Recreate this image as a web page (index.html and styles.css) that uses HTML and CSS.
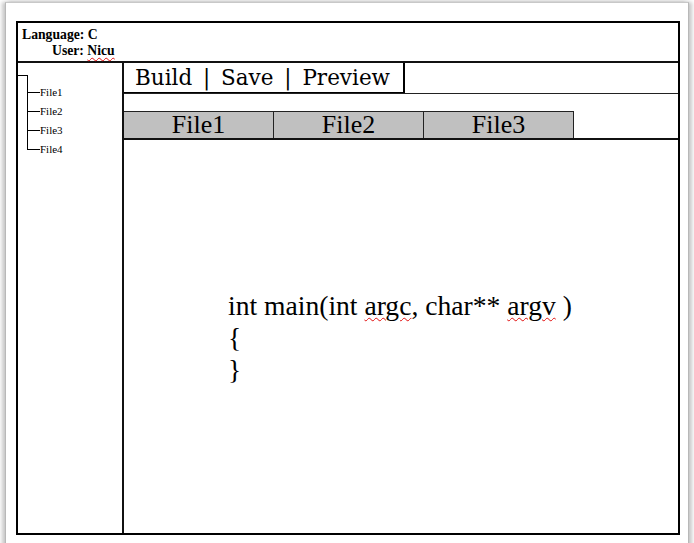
FILE: index.html
```html
<!DOCTYPE html>
<html>
<head>
<meta charset="utf-8">
<link rel="stylesheet" href="styles.css">
</head>
<body>
<div class="page">
  <div class="frame">
    <div class="header">
      <div class="hline">Language: C</div>
      <div class="hline indent">User: <span class="spell">Nicu</span></div>
    </div>
    <div class="body">
      <div class="sidebar">
        <div class="tree">
          <div class="tree-top"></div>
          <ul class="tree-list">
            <li>File1</li>
            <li>File2</li>
            <li>File3</li>
            <li>File4</li>
          </ul>
        </div>
      </div>
      <div class="main">
        <div class="toolbar-row">
          <div class="toolbar">Build | Save | Preview</div>
        </div>
        <div class="gap"></div>
        <div class="tabs">
          <div class="tab">File1</div>
          <div class="tab">File2</div>
          <div class="tab">File3</div>
        </div>
        <div class="editor">
          <div class="code">
            <div>int main(int <span class="spell">argc</span>, char** <span class="spell">argv</span> )</div>
            <div>{</div>
            <div>}</div>
          </div>
        </div>
      </div>
    </div>
  </div>
</div>
</body>
</html>
```
FILE: styles.css
```css
html, body {
  margin: 0;
  padding: 0;
  background: #fff;
  overflow: hidden;
  height: 543px;
}
.page {
  margin: 2px 5px 0 5px;
  height: 560px;
  border-top: 1px solid #c8c8c8;
  border-left: 1px solid #b8b8b8;
  border-right: 1px solid #b8b8b8;
  box-shadow: -3px 0 4px rgba(0,0,0,0.22), 3px 0 4px rgba(0,0,0,0.22);
  background: #fff;
  padding: 18px 0 0 10px;
  box-sizing: border-box;
}
.frame {
  width: 664px;
  height: 514px;
  border: 2px solid #000;
  box-sizing: border-box;
  display: flex;
  flex-direction: column;
  font-family: "Liberation Serif", "Times New Roman", serif;
  color: #000;
}
.header {
  height: 40px;
  border-bottom: 2px solid #111;
  box-sizing: border-box;
  padding: 4px 0 0 4px;
  font-weight: bold;
  font-size: 13.7px;
  line-height: 16px;
}
.indent {
  padding-left: 30px;
}
.spell {
  text-decoration: underline wavy #e01010;
  text-decoration-thickness: 1px;
  text-underline-offset: 2px;
}
.body {
  flex: 1;
  display: flex;
  min-height: 0;
}
.sidebar {
  width: 106px;
  border-right: 2px solid #111;
  box-sizing: border-box;
}
.tree {
  margin-top: 12px;
}
.tree-top {
  width: 10px;
  border-top: 1px solid #000;
}
.tree-list {
  list-style: none;
  margin: 0 0 0 9px;
  padding: 7px 0 0 0;
  font-size: 11px;
}
.tree-list li {
  position: relative;
  height: 19px;
  line-height: 19px;
  padding-left: 13px;
}
.tree-list li::before {
  content: "";
  position: absolute;
  left: 0;
  top: -10px;
  width: 12px;
  height: 19px;
  border-left: 1px solid #000;
  border-bottom: 1px solid #000;
}
.tree-list li:first-child::before {
  top: -8px;
  height: 17px;
}
.main {
  flex: 1;
  display: flex;
  flex-direction: column;
}
.toolbar-row {
  height: 31px;
  border-bottom: 1px solid #222;
  box-sizing: border-box;
}
.toolbar {
  width: 281px;
  height: 30px;
  box-sizing: border-box;
  border-right: 2px solid #000;
  border-bottom: 1px solid #000;
  padding-left: 11px;
  font-family: "DejaVu Serif", serif;
  font-size: 21.5px;
  word-spacing: 4px;
  line-height: 29px;
  white-space: nowrap;
}
.gap {
  height: 17px;
}
.tabs {
  display: flex;
}
.tab {
  width: 150px;
  height: 27px;
  box-sizing: border-box;
  background: #c0c0c0;
  border-top: 1px solid #222;
  border-right: 1px solid #222;
  text-align: center;
  font-size: 26px;
  line-height: 26px;
}
.editor {
  flex: 1;
  border-top: 2px solid #111;
  padding: 150px 0 0 104px;
}
.code {
  font-size: 27.6px;
  line-height: 32px;
}
```
